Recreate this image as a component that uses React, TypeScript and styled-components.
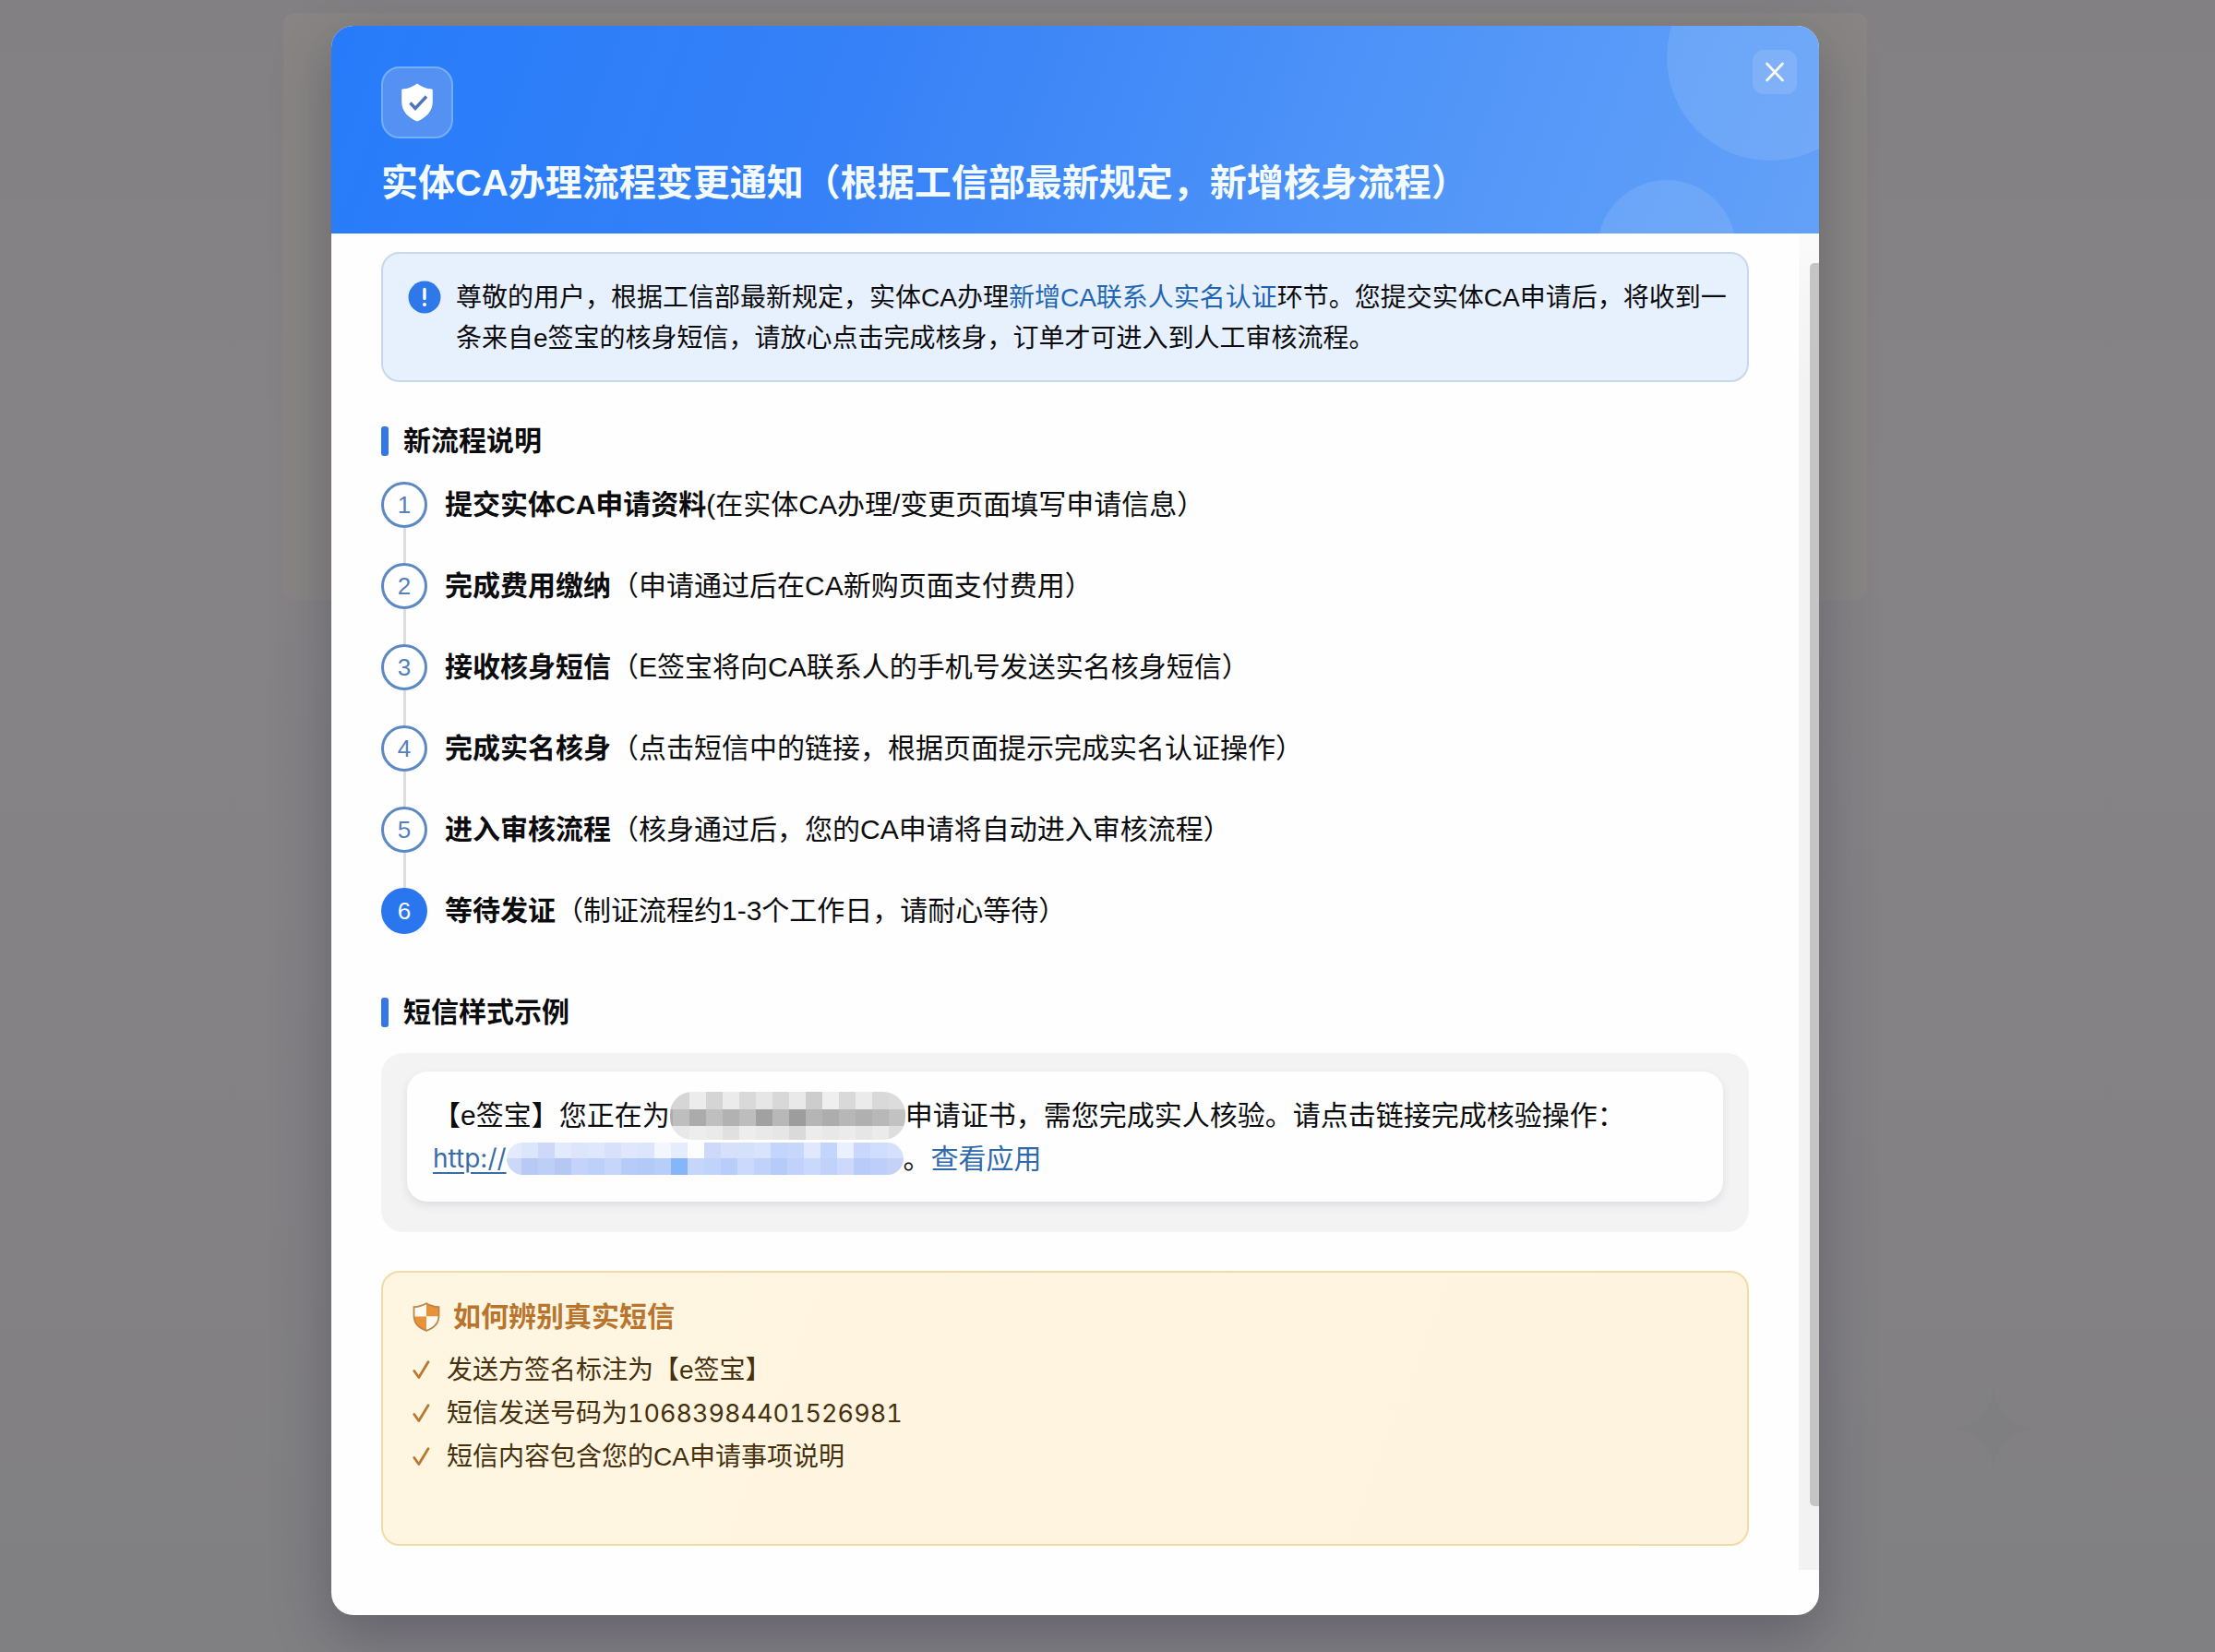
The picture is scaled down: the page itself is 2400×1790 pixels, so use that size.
import React from 'react';
import styled, { createGlobalStyle } from 'styled-components';

const GlobalStyle = createGlobalStyle`
  *, *::before, *::after { box-sizing: border-box; }
  body {
    margin: 0;
    background: #848284;
    color: #0c0c0e;
    font-family: "Liberation Sans", "Noto Sans CJK SC", sans-serif;
  }
  h1, h2, h3, p, ol, ul { margin: 0; padding: 0; }
  ol, ul { list-style: none; }
`;

const Overlay = styled.div`
  position: relative;
  display: grid;
  grid-template-columns: minmax(0, 1fr);
  justify-items: center;
  align-items: start;
  min-height: 100vh;
  padding: 14px 70px 40px 0;
  background: linear-gradient(180deg, #828082 0%, #858385 30%, #838184 70%, #807f82 100%);
`;

const PageCard = styled.div`
  grid-area: 1 / 1;
  width: 100%;
  max-width: 1716px;
  height: 636px;
  border-radius: 12px;
  background: #888584;
`;

const Sparkle = styled.svg`
  position: absolute;
  right: 194px;
  bottom: 196px;
  width: 92px;
  height: 92px;
  fill: #7f7e80;
`;

const Modal = styled.section`
  grid-area: 1 / 1;
  z-index: 1;
  width: 100%;
  max-width: 1612px;
  margin-top: 14px;
  padding-bottom: 49px;
  border-radius: 24px;
  overflow: hidden;
  background: #fefefe;
  box-shadow: 0 20px 60px rgba(40, 38, 58, 0.34);
`;

const Header = styled.header`
  position: relative;
  overflow: hidden;
  padding: 44px 52px 31px 54px;
  background: linear-gradient(110deg, #277bfa 0%, #3681f7 35%, #4f94f8 70%, #63a1f8 100%);
`;

const Bubble = styled.span<{ $size: number; $right: number; $top: number }>`
  position: absolute;
  top: ${(p) => p.$top}px;
  right: ${(p) => p.$right}px;
  width: ${(p) => p.$size}px;
  height: ${(p) => p.$size}px;
  border-radius: 50%;
  background: rgba(255, 255, 255, 0.1);
`;

const HeaderIcon = styled.div`
  display: flex;
  align-items: center;
  justify-content: center;
  width: 78px;
  height: 78px;
  border: 2px solid #73b0fb;
  border-radius: 20px;
  background: #5590f3;
`;

const Title = styled.h1`
  position: relative;
  margin-top: 24px;
  color: #f4fcff;
  font-size: 40px;
  font-weight: 600;
  line-height: 48px;
`;

const CloseButton = styled.button`
  position: absolute;
  top: 26px;
  right: 24px;
  display: flex;
  align-items: center;
  justify-content: center;
  width: 48px;
  height: 48px;
  padding: 0;
  border: 0;
  border-radius: 12px;
  background: rgba(255, 255, 255, 0.12);
  cursor: pointer;
`;

const Body = styled.div`
  display: flex;
`;

const Content = styled.div`
  flex: 1;
  min-width: 0;
  padding: 20px 54px 26px 54px;
`;

const ScrollTrack = styled.div`
  display: flex;
  justify-content: flex-end;
  flex: none;
  width: 22px;
  padding: 32px 0 69px;
  background: linear-gradient(180deg, #fafafa 0, #f2f2f3 160px);
`;

const ScrollThumb = styled.div`
  width: 10px;
  border-radius: 5px 0 0 5px;
  background: #c5c5c6;
`;

const Notice = styled.div`
  display: flex;
  gap: 16px;
  padding: 26px 20px 23px 27px;
  border: 2px solid #c8d8ec;
  border-radius: 20px;
  background: #e7f0fd;
`;

const NoticeIcon = styled.svg`
  flex: none;
  width: 36px;
  height: 36px;
  margin-top: 3px;
`;

const NoticeText = styled.p`
  height: 88px;
  font-size: 28px;
  line-height: 44px;
`;

const Highlight = styled.span`
  color: #1f66b4;
`;

const SectionTitle = styled.h2`
  display: flex;
  align-items: center;
  gap: 16px;
  font-size: 30px;
  font-weight: 600;
  line-height: 40px;

  &::before {
    content: "";
    width: 8px;
    height: 32px;
    border-radius: 3px;
    background: #3577e6;
  }
`;

const Section = styled.section<{ $top: number }>`
  display: flex;
  flex-direction: column;
  gap: 24px;
  padding-top: ${(p) => p.$top}px;
`;

const Step = styled.li`
  display: flex;
  align-items: flex-start;
  gap: 19px;
  height: 88px;

  &:last-child { height: 50px; }
`;

const StepRail = styled.div`
  display: flex;
  flex-direction: column;
  align-items: center;
  width: 50px;
  height: 100%;
`;

const StepNumber = styled.span<{ $filled: boolean }>`
  display: flex;
  align-items: center;
  justify-content: center;
  flex: none;
  width: 50px;
  height: 50px;
  border: 3px solid ${(p) => (p.$filled ? '#2a76ee' : '#5c89c4')};
  border-radius: 50%;
  background: ${(p) => (p.$filled ? '#2a76ee' : '#fefefe')};
  color: ${(p) => (p.$filled ? '#ffffff' : '#5580b8')};
  font-size: 26px;
  line-height: 40px;
`;

const StepLine = styled.span`
  flex: 1;
  width: 3px;
  background: #dcdde0;
`;

const StepText = styled.p`
  font-size: 30px;
  line-height: 50px;
`;

const SmsPanel = styled.div`
  padding: 20px 28px 33px;
  border-radius: 24px;
  background: #f3f3f4;
`;

const SmsBubble = styled.p`
  padding: 24px 28px 23px;
  border-radius: 22px;
  background: #fefefe;
  box-shadow: 0 4px 10px rgba(40, 50, 60, 0.1);
  font-size: 30px;
  line-height: 47px;
`;

const SmsLine = styled.span`
  display: flex;
  align-items: center;
  height: 47px;
  white-space: nowrap;
`;

const LinkUrl = styled.a`
  display: flex;
  align-items: center;
  color: #3a6ca8;
  font-family: Inter, "Noto Sans CJK SC", sans-serif;
  font-size: 28px;
  text-decoration: underline;
  text-decoration-thickness: 2px;
  text-underline-offset: 5px;
`;

const AppLink = styled.a`
  color: #2f69ad;
  text-decoration: none;
`;

const Mosaic = styled.span`
  display: inline-flex;
  flex-direction: column;
  flex: none;
  border-radius: 24px;
  overflow: hidden;
`;

const MosaicRow = styled.span<{ $height: number }>`
  display: flex;
  height: ${(p) => p.$height}px;
`;

const MosaicCell = styled.span<{ $tone: string; $width: number }>`
  width: ${(p) => p.$width}px;
  background: ${(p) => p.$tone};
`;

const TipsPanel = styled.div`
  margin-top: 42px;
  padding: 28px 32px 71px;
  border: 2px solid #efdca6;
  border-radius: 20px;
  background: linear-gradient(110deg, #fff6e2 0%, #fef3de 100%);
`;

const TipsTitle = styled.h3`
  display: flex;
  align-items: center;
  gap: 14px;
  margin-bottom: 14px;
  color: #b9752d;
  font-size: 30px;
  font-weight: 600;
  line-height: 40px;
`;

const Tip = styled.li`
  display: flex;
  align-items: center;
  gap: 17px;
  color: #46300e;
  font-size: 28px;
  line-height: 47px;
`;

const SenderNumber = styled.span`
  font-family: Inter, sans-serif;
  font-size: 27px;
  font-variant-numeric: tabular-nums;
`;

const STEPS = [
  { name: '提交实体CA申请资料', detail: '(在实体CA办理/变更页面填写申请信息）' },
  { name: '完成费用缴纳', detail: '（申请通过后在CA新购页面支付费用）' },
  { name: '接收核身短信', detail: '（E签宝将向CA联系人的手机号发送实名核身短信）' },
  { name: '完成实名核身', detail: '（点击短信中的链接，根据页面提示完成实名认证操作）' },
  { name: '进入审核流程', detail: '（核身通过后，您的CA申请将自动进入审核流程）' },
  { name: '等待发证', detail: '（制证流程约1-3个工作日，请耐心等待）' },
];

const TIPS = [
  { text: '发送方签名标注为【e签宝】' },
  { text: '短信发送号码为', number: '10683984401526981' },
  { text: '短信内容包含您的CA申请事项说明' },
];

type MosaicData = { height: number; tones: string[] }[];

const NAME_MOSAIC: MosaicData = [
  { height: 19, tones: ['#cfcfcf', '#d6d6d6', '#ececec', '#d5d5d5', '#ebebeb', '#d9d9d9', '#e6e6e6', '#d8d8d8', '#e9e9e9', '#cdcdcd', '#efefef', '#d9d9d9', '#ebebeb', '#d9d9d9', '#dcdcdc'] },
  { height: 18, tones: ['#adadad', '#bebebe', '#ababab', '#bfbfbf', '#b2b2b2', '#bdbdbd', '#a1a1a1', '#b8b8b8', '#9d9d9d', '#b5b5b5', '#adadad', '#b7b7b7', '#b0b0b0', '#b8b8b8', '#c2c2c2'] },
  { height: 15, tones: ['#e0e0e0', '#e8e8e8', '#ededed', '#eaeaea', '#e0e0e0', '#ededed', '#e9e9e9', '#e6e6e6', '#dadada', '#ececec', '#e8e8e8', '#ebebeb', '#e6e6e6', '#ebebeb', '#dedede'] },
];

const URL_MOSAIC: MosaicData = [
  { height: 17, tones: ['#e4eafd', '#dbe5fc', '#ced9fa', '#e3eafd', '#dce5fc', '#dfe7fd', '#d7e1fb', '#dfe6fd', '#dde5fd', '#f3f6ff', '#e5ecfe', '#fcfdff', '#ced9f9', '#d6e0fb', '#d5e0fb', '#d8e3fd', '#c4d5fb', '#c7d7fc', '#e0e8fe', '#c4d5fc', '#eaf0ff', '#c8d7fb', '#d0ddfd', '#d6dffb'] },
  { height: 18, tones: ['#cbd8f8', '#b7c9f5', '#bdcef7', '#b5c8f5', '#c4d3f9', '#bdd0fa', '#c6d5fa', '#b6cbf9', '#b3caf9', '#b7cdfa', '#85b6fa', '#c6d6fb', '#c0d3fb', '#b8cdfa', '#cad9fc', '#c1d2fa', '#b7cbfa', '#c0d1fb', '#c9d8fd', '#c0d2fb', '#ccd9fc', '#b9ccf9', '#bccef9', '#c4d2f7'] },
];

function MosaicMask({ data, lead }: { data: MosaicData; lead: number }) {
  return (
    <Mosaic aria-hidden="true">
      {data.map((row, r) => (
        <MosaicRow key={r} $height={row.height}>
          {row.tones.map((tone, c) => (
            <MosaicCell key={c} $tone={tone} $width={c === 0 ? lead : 18} />
          ))}
        </MosaicRow>
      ))}
    </Mosaic>
  );
}

function ShieldCheck() {
  return (
    <svg width="34" height="42" viewBox="0 0 34 42" aria-hidden="true">
      <path d="M17 0.5C12.5 4 7 6 1.2 6.6C0.5 6.7 0.2 7.2 0.2 8V20C0.2 31 7.5 37.5 17 41.5C26.5 37.5 33.8 31 33.8 20V8C33.8 7.2 33.5 6.7 32.8 6.6C27 6 21.5 4 17 0.5Z" fill="#fff" />
      <path d="M9.5 21.5L15 27.5L27 14.5" fill="none" stroke="#4c76ba" strokeWidth="3.4" />
    </svg>
  );
}

function QuarterShield() {
  return (
    <svg width="30" height="32" viewBox="0 0 30 32" aria-hidden="true">
      <path d="M15 1.2C11 3.6 6.5 4.8 1.8 5V15.5H15Z" fill="#fffaf0" />
      <path d="M15 1.2C19 3.6 23.5 4.8 28.2 5V15.5H15Z" fill="#e8923a" />
      <path d="M1.8 15.5C2 23 7 28 15 30.8V15.5Z" fill="#e8923a" />
      <path d="M28.2 15.5C28 23 23 28 15 30.8V15.5Z" fill="#fffaf0" />
      <path d="M15 1.2C11 3.6 6.5 4.8 1.5 5.2V14.5C1.5 23 7 28 15 30.8C23 28 28.5 23 28.5 14.5V5.2C23.5 4.8 19 3.6 15 1.2Z" fill="none" stroke="#bd8447" strokeWidth="1.8" />
    </svg>
  );
}

function Tick() {
  return (
    <svg width="20" height="22" viewBox="0 0 20 22" aria-hidden="true">
      <path d="M1.8 11.5L6.8 18.5L17 1.8" fill="none" stroke="#b97832" strokeWidth="2.8" strokeLinecap="round" strokeLinejoin="round" />
    </svg>
  );
}

export default function App() {
  return (
    <>
      <GlobalStyle />
      <Overlay>
        <PageCard />
        <Sparkle viewBox="0 0 92 92" aria-hidden="true">
          <path d="M46 0C49 30 62 43 92 46C62 49 49 62 46 92C43 62 30 49 0 46C30 43 43 30 46 0Z" />
        </Sparkle>
        <Modal role="dialog" aria-labelledby="notice-title">
          <Header>
            <Bubble $size={224} $right={-59} $top={-78} />
            <Bubble $size={150} $right={90} $top={167} />
            <HeaderIcon>
              <ShieldCheck />
            </HeaderIcon>
            <Title id="notice-title">实体CA办理流程变更通知（根据工信部最新规定，新增核身流程）</Title>
            <CloseButton type="button" aria-label="关闭">
              <svg width="22" height="22" viewBox="0 0 22 22" aria-hidden="true">
                <path d="M2.5 2L19.5 20M19.5 2L2.5 20" stroke="#fff" strokeWidth="2.6" strokeLinecap="round" />
              </svg>
            </CloseButton>
          </Header>
          <Body>
            <Content>
              <Notice>
                <NoticeIcon viewBox="0 0 36 36" aria-hidden="true">
                  <circle cx="18" cy="18" r="17.5" fill="#2f78ea" />
                  <path d="M18 9.5V19.5" stroke="#fff" strokeWidth="3.4" strokeLinecap="round" />
                  <circle cx="18" cy="26" r="2" fill="#fff" />
                </NoticeIcon>
                <NoticeText>
                  尊敬的用户，根据工信部最新规定，实体CA办理<Highlight>新增CA联系人实名认证</Highlight>环节。您提交实体CA申请后，将收到一条来自e签宝的核身短信，请放心点击完成核身，订单才可进入到人工审核流程。
                </NoticeText>
              </Notice>

              <Section $top={44}>
                <SectionTitle>新流程说明</SectionTitle>
                <ol>
                  {STEPS.map((step, i) => {
                    const last = i === STEPS.length - 1;
                    return (
                      <Step key={step.name}>
                        <StepRail>
                          <StepNumber $filled={last}>{i + 1}</StepNumber>
                          {!last && <StepLine />}
                        </StepRail>
                        <StepText>
                          <strong>{step.name}</strong>
                          {step.detail}
                        </StepText>
                      </Step>
                    );
                  })}
                </ol>
              </Section>

              <Section $top={65}>
                <SectionTitle>短信样式示例</SectionTitle>
                <SmsPanel>
                  <SmsBubble>
                    <SmsLine>
                      【e签宝】您正在为
                      <MosaicMask data={NAME_MOSAIC} lead={3} />
                      申请证书，需您完成实人核验。请点击链接完成核验操作：
                    </SmsLine>
                    <SmsLine>
                      <LinkUrl href="#">
                        http://
                        <MosaicMask data={URL_MOSAIC} lead={16} />
                      </LinkUrl>
                      。<AppLink href="#">查看应用</AppLink>
                    </SmsLine>
                  </SmsBubble>
                </SmsPanel>
              </Section>

              <TipsPanel>
                <TipsTitle>
                  <QuarterShield />
                  如何辨别真实短信
                </TipsTitle>
                <ul>
                  {TIPS.map((tip) => (
                    <Tip key={tip.text}>
                      <Tick />
                      <span>
                        {tip.text}
                        {tip.number && <SenderNumber>{tip.number}</SenderNumber>}
                      </span>
                    </Tip>
                  ))}
                </ul>
              </TipsPanel>
            </Content>
            <ScrollTrack aria-hidden="true">
              <ScrollThumb />
            </ScrollTrack>
          </Body>
        </Modal>
      </Overlay>
    </>
  );
}
